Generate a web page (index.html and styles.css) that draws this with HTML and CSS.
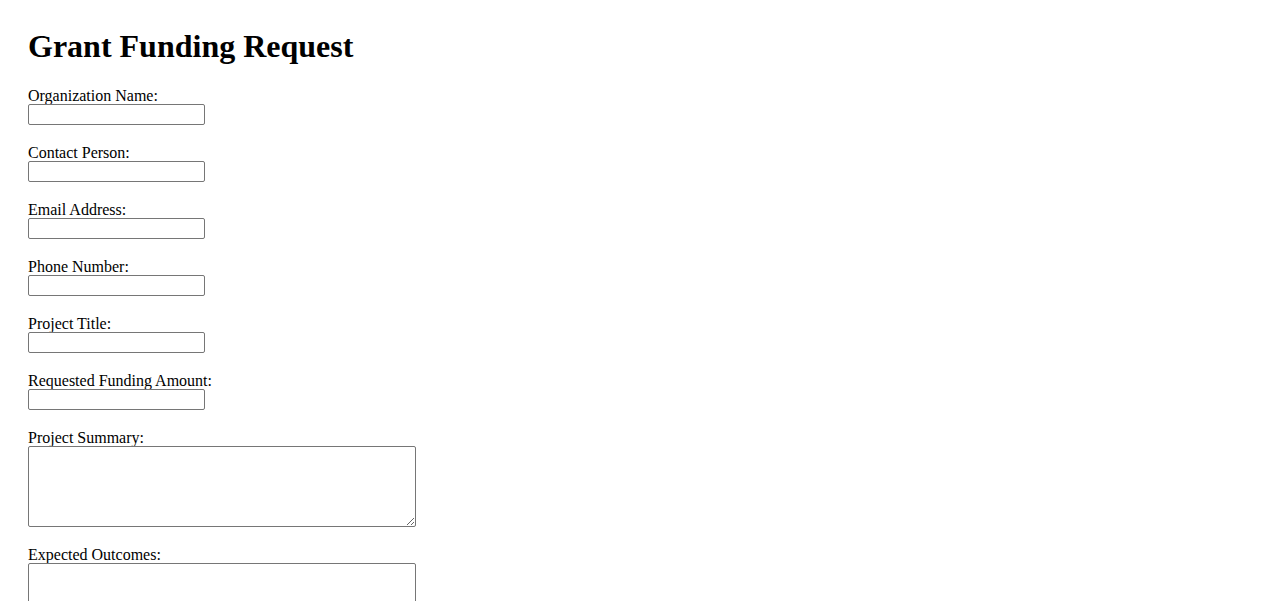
FILE: index.html
```html
<!DOCTYPE html>
<html lang="en">
<head>
<meta charset="utf-8">
<title>Grant Funding Request</title>
<link rel="stylesheet" href="styles.css">
</head>
<body>
<h1 class="title">Grant Funding Request</h1>
<form class="form">
  <div class="field">
    <label class="label" for="org">Organization Name:</label>
    <input class="input" type="text" id="org">
  </div>
  <div class="field">
    <label class="label" for="contact">Contact Person:</label>
    <input class="input" type="text" id="contact">
  </div>
  <div class="field">
    <label class="label" for="email">Email Address:</label>
    <input class="input" type="email" id="email">
  </div>
  <div class="field">
    <label class="label" for="phone">Phone Number:</label>
    <input class="input" type="tel" id="phone">
  </div>
  <div class="field">
    <label class="label" for="ptitle">Project Title:</label>
    <input class="input" type="text" id="ptitle">
  </div>
  <div class="field">
    <label class="label" for="amount">Requested Funding Amount:</label>
    <input class="input" type="text" id="amount">
  </div>
  <div class="field">
    <label class="label" for="summary">Project Summary:</label>
    <textarea class="textarea" id="summary"></textarea>
  </div>
  <div class="field">
    <label class="label" for="outcomes">Expected Outcomes:</label>
    <textarea class="textarea" id="outcomes"></textarea>
  </div>
</form>
</body>
</html>
```
FILE: styles.css
```css
html {
  background: #ffffff;
}
body {
  margin: 8px;
  padding: 20px;
  font-family: "Liberation Serif", "Times New Roman", serif;
  font-size: 16px;
  color: #000000;
}
.title {
  margin: 0 0 20px 0;
  font-size: 32px;
  font-weight: bold;
  line-height: 37px;
}
.form {
  display: flex;
  flex-direction: column;
}
.field {
  display: flex;
  flex-direction: column;
  align-items: flex-start;
  margin-bottom: 17px;
}
.label {
  display: block;
  padding-top: 1px;
  height: 18px;
  line-height: 19px;
}
.input {
  display: block;
  box-sizing: border-box;
  width: 177px;
  height: 21px;
  margin: 0;
  padding: 1px 2px;
  border: 1px solid #767676;
  border-radius: 2px;
  background: #ffffff;
  font-family: "Liberation Sans", Arial, sans-serif;
  font-size: 13.333px;
}
.textarea {
  display: block;
  box-sizing: border-box;
  width: 388px;
  height: 81px;
  margin: 0;
  padding: 2px;
  border: 1px solid #767676;
  border-radius: 2px;
  background: #ffffff;
  font-family: "Liberation Mono", monospace;
  font-size: 13.333px;
}
```
